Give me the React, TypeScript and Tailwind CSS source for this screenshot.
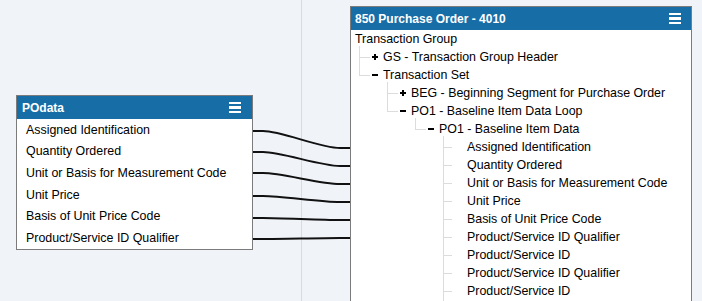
import React from "react";

type Guide = "none" | "tee" | "elbow";
type Row = { text: string; guides: Guide[]; toggle?: "+" | "-" };

const tree: Row[] = [
  { text: "Transaction Group", guides: [] },
  { text: "GS - Transaction Group Header", guides: ["tee"], toggle: "+" },
  { text: "Transaction Set", guides: ["elbow"], toggle: "-" },
  { text: "BEG - Beginning Segment for Purchase Order", guides: ["none", "tee"], toggle: "+" },
  { text: "PO1 - Baseline Item Data Loop", guides: ["none", "elbow"], toggle: "-" },
  { text: "PO1 - Baseline Item Data", guides: ["none", "none", "elbow"], toggle: "-" },
  ...[
    "Assigned Identification",
    "Quantity Ordered",
    "Unit or Basis for Measurement Code",
    "Unit Price",
    "Basis of Unit Price Code",
    "Product/Service ID Qualifier",
    "Product/Service ID",
    "Product/Service ID Qualifier",
    "Product/Service ID",
  ].map((t) => ({ text: t, guides: ["none", "none", "none", "tee"] as Guide[] })),
];

const leftFields = [
  "Assigned Identification",
  "Quantity Ordered",
  "Unit or Basis for Measurement Code",
  "Unit Price",
  "Basis of Unit Price Code",
  "Product/Service ID Qualifier",
];

const links: [number, number][] = [
  [131, 148],
  [152, 166],
  [173, 184],
  [196, 202],
  [218, 220],
  [239, 238],
];

function Hamburger() {
  return (
    <div className="flex w-[12px] flex-col gap-[2px]">
      <span className="block h-[2.5px] w-full bg-white" />
      <span className="block h-[2.5px] w-full bg-white" />
      <span className="block h-[2.5px] w-full bg-white" />
    </div>
  );
}

function Toggle({ kind }: { kind: "+" | "-" }) {
  return (
    <svg width="6" height="6" viewBox="0 0 6 6" className="block">
      <rect x="0" y="2" width="6" height="2" fill="#000" />
      {kind === "+" && <rect x="2" y="0" width="2" height="6" fill="#000" />}
    </svg>
  );
}

function GuideLines({ g, leaf, extend }: { g: Guide; leaf: boolean; extend: boolean }) {
  if (g === "none") return null;
  return (
    <>
      <span
        className={
          g === "tee"
            ? extend
              ? "absolute left-[4px] top-[-2px] bottom-[-12px] w-px bg-[#dcdcdc]"
              : "absolute left-[4px] top-[-2px] bottom-0 w-px bg-[#dcdcdc]"
            : "absolute left-[4px] top-[-2px] h-[11px] w-px bg-[#dcdcdc]"
        }
      />
      <span
        className={
          leaf
            ? "absolute left-[4px] top-[9px] h-px w-[9px] bg-[#dcdcdc]"
            : "absolute left-[4px] top-[9px] h-px w-[11px] bg-[#dcdcdc]"
        }
      />
    </>
  );
}

export default function App() {
  return (
    <div className="relative h-[301px] w-[702px] overflow-hidden bg-[#f0f4f9] font-['Liberation_Sans',Arial,sans-serif] text-[12.4px] text-black">
      <div className="flex h-full">
        <div className="h-full w-[302px] border-r border-[#d6dce3]" />
        <div className="h-full flex-1" />
      </div>

      <svg className="absolute left-0 top-0" width="702" height="301" viewBox="0 0 702 301">
        {links.map(([a, b], i) => (
          <path
            key={i}
            d={`M252 ${a} H263 C282 ${a}, 320 ${b}, 340 ${b} H351`}
            fill="none"
            stroke="#111"
            strokeWidth="2"
          />
        ))}
      </svg>

      {/* Left node */}
      <div className="absolute left-[16px] top-[95px] w-[237px] border border-[#7b7b7b] bg-white">
        <div className="flex h-[23px] items-center justify-between bg-[#176ea7] pl-[5px] pr-[11px] text-[12px] font-bold text-white">
          <span>POdata</span>
          <Hamburger />
        </div>
        <div className="flex flex-col">
          {leftFields.map((f) => (
            <div key={f} className="flex h-[21.7px] items-center pl-[9px]">
              {f}
            </div>
          ))}
        </div>
      </div>

      {/* Right node */}
      <div className="absolute left-[350px] top-[6px] h-[330px] w-[342px] border border-[#7b7b7b] bg-white">
        <div className="flex h-[23px] items-center justify-between bg-[#176ea7] pl-[4px] pr-[10px] text-[12px] font-bold text-white">
          <span>850 Purchase Order - 4010</span>
          <Hamburger />
        </div>
        <div className="flex flex-col pl-[4px]">
          {tree.map((r, i) => {
            const depth = r.guides.length;
            const leaf = !r.toggle;
            const isLast = i === tree.length - 1;
            return (
              <div key={i} className="flex h-[18px] items-center">
                {r.guides.map((g, k) => (
                  <div key={k} className="relative h-full w-[28px] shrink-0">
                    {k === depth - 1 && (
                      <>
                        <GuideLines g={g} leaf={leaf} extend={isLast} />
                        {r.toggle && (
                          <span className="absolute left-[17px] top-[6px]">
                            <Toggle kind={r.toggle} />
                          </span>
                        )}
                      </>
                    )}
                  </div>
                ))}
                <span className="whitespace-nowrap leading-[18px]">{r.text}</span>
              </div>
            );
          })}
        </div>
      </div>
    </div>
  );
}
